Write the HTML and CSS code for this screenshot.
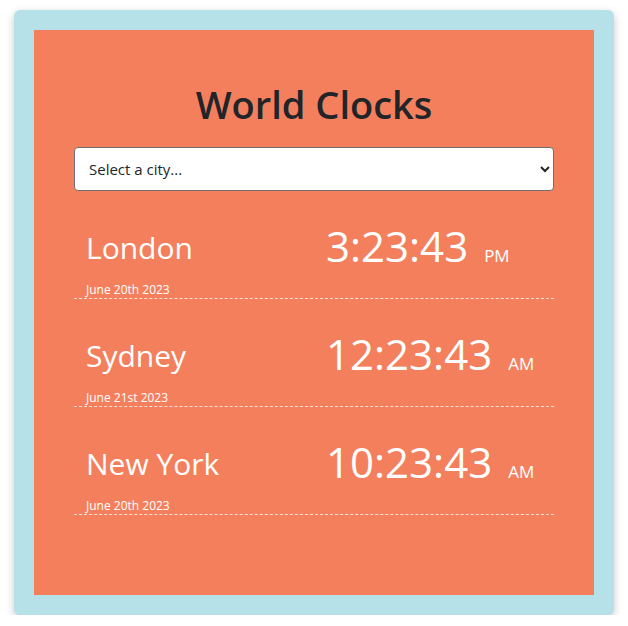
FILE: index.html
```html
<!DOCTYPE html>
<html lang="en">
<head>
<meta charset="utf-8">
<title>World Clocks</title>
<link rel="stylesheet" href="styles.css">
</head>
<body>
<div class="frame">
  <main class="app">
    <h1 class="title">World Clocks</h1>
    <select class="city-select">
      <option>Select a city...</option>
      <option>Paris</option>
      <option>Tokyo</option>
    </select>
    <div class="cities">
      <div class="city">
        <div class="city-info">
          <h2 class="city-name">London</h2>
          <div class="city-date">June 20th 2023</div>
        </div>
        <div class="city-time">3:23:43<span class="ampm">PM</span></div>
      </div>
      <div class="city">
        <div class="city-info">
          <h2 class="city-name">Sydney</h2>
          <div class="city-date">June 21st 2023</div>
        </div>
        <div class="city-time">12:23:43<span class="ampm">AM</span></div>
      </div>
      <div class="city">
        <div class="city-info">
          <h2 class="city-name">New York</h2>
          <div class="city-date">June 20th 2023</div>
        </div>
        <div class="city-time">10:23:43<span class="ampm">AM</span></div>
      </div>
    </div>
  </main>
</div>
</body>
</html>
```

FILE: styles.css
```css
* { box-sizing: border-box; }

html, body {
  margin: 0;
  padding: 0;
  background: #ffffff;
}

body {
  font-family: "Open Sans", "Noto Sans", sans-serif;
}

.frame {
  width: 600px;
  margin: 10px 0 0 14px;
  padding: 20px;
  background: #b6e1e8;
  border-radius: 6px;
  box-shadow: 0 3px 8px rgba(0, 0, 0, 0.22);
}

.app {
  background: #f47f5d;
  padding: 52px 40px 80px;
}

.title {
  margin: 0 0 21px;
  font-size: 38px;
  line-height: 44px;
  font-weight: 600;
  color: #212529;
  text-align: center;
}

.city-select {
  display: block;
  width: 480px;
  height: 44px;
  padding: 0 10px;
  font-family: "Open Sans", sans-serif;
  font-size: 15px;
  color: #212529;
  background: #ffffff;
  border: 1px solid #6f6f6f;
  border-radius: 4px;
}

.city {
  display: grid;
  grid-template-columns: 1fr 1fr;
  height: 108px;
  border-bottom: 1px dashed rgba(255, 255, 255, 0.75);
  color: #ffffff;
}

.city-info {
  padding: 39px 12px 0 12px;
}

.city-name {
  margin: 0;
  font-size: 30px;
  line-height: 35px;
  font-weight: 400;
}

.city-date {
  margin-top: 17px;
  font-size: 12px;
  line-height: 16px;
}

.city-time {
  padding: 30px 12px 0 12px;
  font-size: 42px;
  line-height: 49px;
  font-weight: 400;
  white-space: nowrap;
}

.ampm {
  margin-left: 16px;
  font-size: 17px;
}
```
